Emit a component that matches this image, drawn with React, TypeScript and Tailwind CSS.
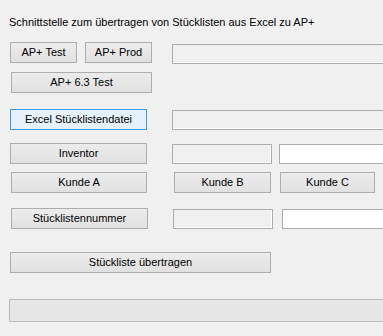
import React from "react";

const btn =
  "h-[21px] border border-[#adadad] bg-gradient-to-b from-[#ececec] to-[#e1e1e1] text-[11px] leading-none text-black flex items-center justify-center shrink-0";
const fieldGray =
  "h-[20px] border border-[#acacac] bg-[#f0f0f0] shadow-[inset_-1px_-1px_0_#ffffff] shrink-0";
const fieldWhite = "h-[20px] border border-[#acacac] bg-white shrink-0";

export default function App() {
  return (
    <div
      className="w-[383px] h-[336px] bg-[#f0f0f0] overflow-hidden text-black"
      style={{ fontFamily: '"Liberation Sans", Arial, sans-serif' }}
    >
      <div className="pt-[16px] pl-[9px] text-[11px] leading-[13px] whitespace-nowrap">
        Schnittstelle zum übertragen von Stücklisten aus Excel zu AP+
      </div>

      <div className="flex items-start mt-[13px]">
        <div className={`${btn} ml-[10px] w-[67px]`}>AP+ Test</div>
        <div className={`${btn} ml-[8px] w-[67px]`}>AP+ Prod</div>
        <div className={`${fieldGray} ml-[20px] mt-[2px] w-[230px] h-[19px]`} />
      </div>

      <div className="flex mt-[8px]">
        <div className={`${btn} ml-[11px] w-[141px]`}>AP+ 6.3 Test</div>
      </div>

      <div className="flex items-start mt-[16px]">
        <div
          className={`h-[21px] w-[137px] ml-[10px] border border-[#3c9cf2] bg-[#e5f1fb] text-[11px] leading-none flex items-center justify-center shrink-0`}
        >
          Excel Stücklistendatei
        </div>
        <div className={`${fieldGray} ml-[25px] mt-[1px] w-[230px]`} />
      </div>

      <div className="flex items-start mt-[13px]">
        <div className={`${btn} ml-[10px] w-[137px]`}>Inventor</div>
        <div className={`${fieldGray} ml-[25px] mt-[1px] w-[100px]`} />
        <div className={`${fieldWhite} ml-[7px] mt-[1px] w-[120px]`} />
      </div>

      <div className="flex items-start mt-[8px]">
        <div className={`${btn} ml-[11px] w-[136px]`}>Kunde A</div>
        <div className={`${btn} ml-[27px] w-[97px]`}>Kunde B</div>
        <div className={`${btn} ml-[9px] w-[95px]`}>Kunde C</div>
      </div>

      <div className="flex items-start mt-[15px]">
        <div className={`${btn} ml-[11px] w-[137px]`}>Stücklistennummer</div>
        <div className={`${fieldGray} ml-[25px] mt-[1px] w-[100px]`} />
        <div className={`${fieldWhite} ml-[9px] mt-[1px] w-[120px]`} />
      </div>

      <div className="flex mt-[23px]">
        <div className={`${btn} ml-[10px] w-[261px]`}>Stückliste übertragen</div>
      </div>

      <div className="mt-[26px] ml-[9px] w-[400px] h-[23px] border border-[#bcbcbc] bg-[#e6e6e6]" />
    </div>
  );
}
